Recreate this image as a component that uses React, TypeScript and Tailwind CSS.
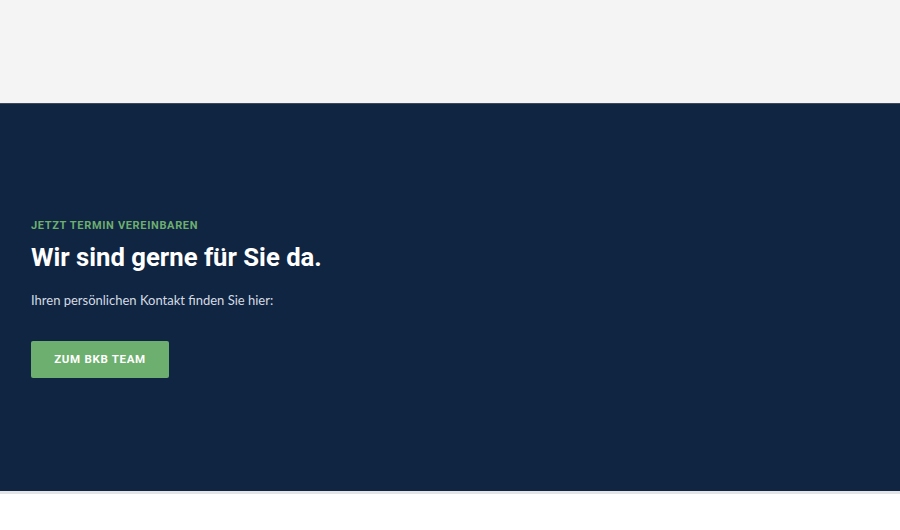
import React from "react";

const App: React.FC = () => {
  return (
    <div className="min-h-[530px] w-full bg-white font-['Roboto',sans-serif]">
      {/* top strip */}
      <div className="h-[104px] border-b border-[#3b4a5c] bg-[#f4f4f4]" />

      {/* contact band */}
      <section className="flex h-[387px] flex-col justify-center bg-[#0f2542] px-[31px] pt-[3px]">
        <p className="text-[11px] font-bold uppercase leading-none tracking-[0.06em] text-[#6dae6e]">
          Jetzt Termin vereinbaren
        </p>
        <h2 className="mt-[9px] text-[25.7px] font-bold leading-[34px] text-white">
          Wir sind gerne für Sie da.
        </h2>
        <p className="mt-[17px] font-['Lato',sans-serif] text-[13px] leading-[18px] text-[#d5dae2]">
          Ihren persönlichen Kontakt finden Sie hier:
        </p>
        <div className="mt-[32px]">
          <button
            type="button"
            className="h-[37px] w-[138px] rounded-[2px] bg-[#6daf6e] text-[11.5px] font-bold uppercase tracking-[0.06em] text-white"
          >
            Zum BKB Team
          </button>
        </div>
      </section>

      <div className="h-[3px] bg-[#e2e4e6]" />
    </div>
  );
};

export default App;
